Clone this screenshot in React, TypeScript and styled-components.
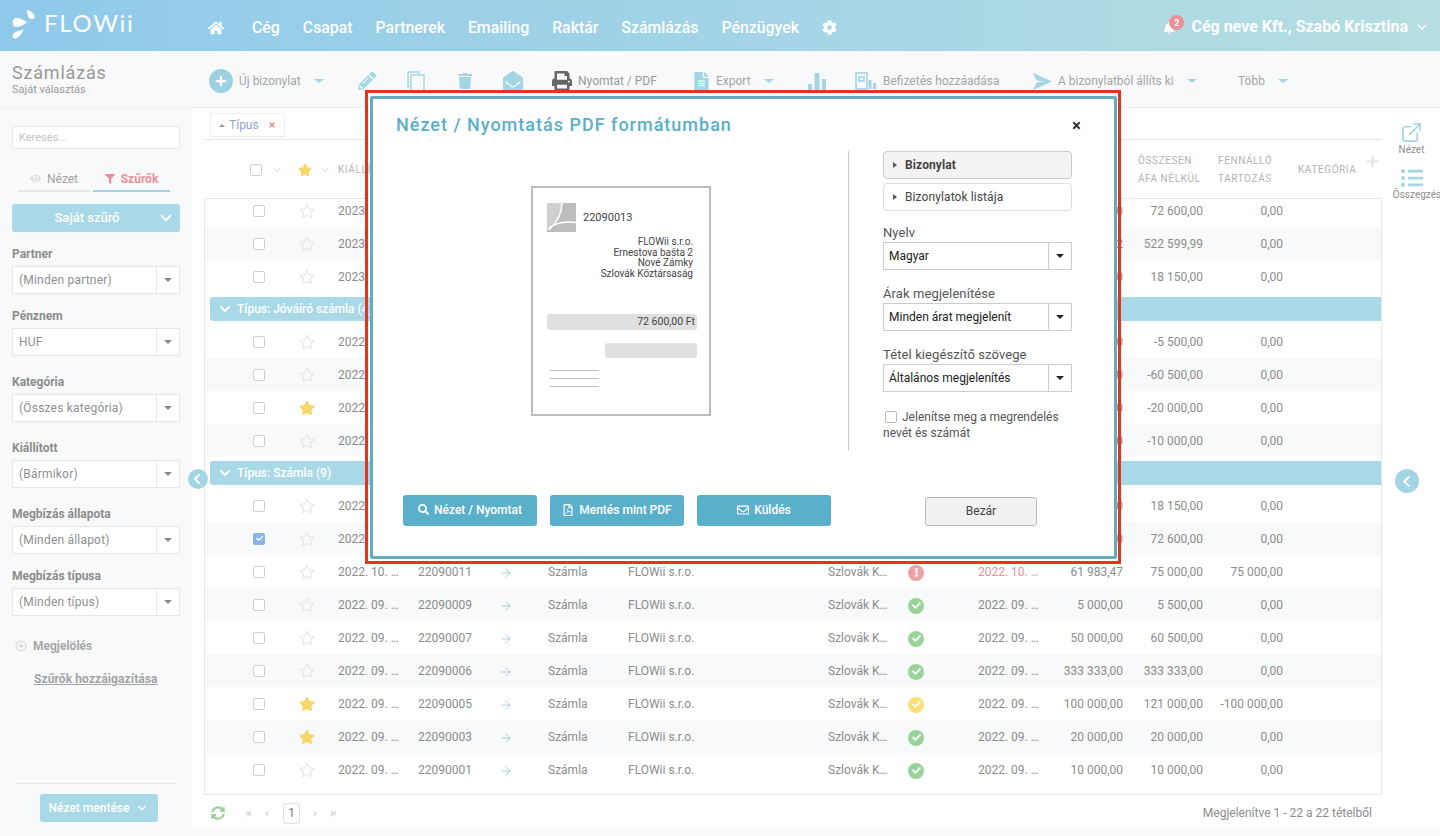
import React from "react";
import styled, { createGlobalStyle } from "styled-components";
import {
  FaHome, FaCog, FaBell, FaPencilAlt, FaTrash, FaEnvelopeOpen, FaPrint, FaFileAlt,
  FaStar, FaRegStar, FaSearch, FaRegEnvelope, FaRegFilePdf, FaEye, FaFilter, FaTimes, FaPlus, FaSyncAlt,
  FaStepBackward, FaStepForward, FaCaretLeft, FaCaretRight, FaCheck, FaExclamation, FaChevronLeft,
  FaListUl,
} from "react-icons/fa";
import { ChevronDown, ArrowRight, ExternalLink, CirclePlus } from "lucide-react";

const Global = createGlobalStyle`
  html, body { margin: 0; padding: 0; height: 836px; overflow: hidden; background: #f7f9fb; }
  * { box-sizing: border-box; }
  body { font-family: Roboto, "Liberation Sans", sans-serif; font-size: 12px; color: #888; }
`;

const Page = styled.div`
  position: relative; width: 1440px; height: 836px; overflow: hidden; display: flex; flex-direction: column;
  background: #f7f9fb;
`;

/* ---------- top navigation ---------- */
const TopBar = styled.header`
  height: 51px; flex: none; display: flex; align-items: center; color: #fff;
  background: linear-gradient(90deg, #8fc9ea 0%, #a3d4e6 50%, #b6dee2 100%);
`;
const LogoBox = styled.div`
  width: 208px; flex: none; display: flex; align-items: center; padding: 0 0 3px 12px; gap: 7px;
`;
const LogoText = styled.span`
  font-family: Lato, Roboto, sans-serif; font-weight: 400; font-size: 24px; letter-spacing: 1.7px; line-height: 26px; margin-bottom: 3px;
`;
const Nav = styled.nav`
  display: flex; align-items: center; gap: 23px; font-size: 15.85px; font-weight: 500; padding-top: 4px;
`;
const NavLink = styled.span`
  white-space: nowrap;
`;
const NavIconSlot = styled.span`
  display: flex; align-items: center; width: 21px;
`;
const UserArea = styled.div`
  margin-left: auto; display: flex; align-items: center; padding-right: 10px; padding-top: 2px;
  font-size: 16px; font-weight: 700; position: relative; white-space: nowrap;
`;
const BellWrap = styled.span`
  position: relative; width: 28px; display: flex; align-items: center; padding-top: 3px;
`;
const Badge = styled.span`
  position: absolute; left: 6px; top: -4px; width: 15px; height: 15px; border-radius: 50%;
  background: #ee8f95; color: #fff; font-size: 9px; font-weight: 700; display: flex; align-items: center; justify-content: center;
`;
const UserChevron = styled.span`
  display: flex; margin-left: 6px;
`;

/* ---------- toolbar ---------- */
const SubBar = styled.div`
  height: 57px; flex: none; display: flex; align-items: center; border-bottom: 1px solid #eef1f3; background: #f7f9fb;
`;
const PageTitleBox = styled.div`
  width: 209px; flex: none; padding-left: 12px; color: #999; padding-top: 1px;
`;
const PageTitle = styled.div`
  font-size: 18px; line-height: 20px; letter-spacing: .8px;
`;
const PageSub = styled.div`
  font-size: 11px; line-height: 13px;
`;
const ToolItem = styled.div<{ $w: number; $dark?: boolean }>`
  width: ${p => p.$w}px; flex: none; display: flex; align-items: center; gap: 6px; font-size: 12px;
  color: ${p => (p.$dark ? "#999" : "#a5a5a5")}; white-space: nowrap; padding-top: 4px;
  svg { color: ${p => (p.$dark ? "#666" : "#a4d5e4")}; flex: none; }
`;
const PlusCircle = styled.span`
  width: 24px; height: 24px; border-radius: 50%; background: #9dd1e2; color: #fff; flex: none; display: flex; align-items: center; justify-content: center;
  svg { color: #fff; }
`;
const ToolCaret = styled.span`
  margin-left: 7px; width: 0; height: 0; border-left: 5px solid transparent; border-right: 5px solid transparent; border-top: 4px solid #a4d5e4; flex: none;
`;
const ExportIcon = styled(FaFileAlt)`
  margin-right: -1px;
`;

/* ---------- body ---------- */
const Body = styled.div`
  flex: 1; display: flex; min-height: 0;
`;
const Sidebar = styled.aside`
  width: 192px; flex: none; padding: 18px 12px 14px; display: flex; flex-direction: column; background: #f7f9fb;
`;
const SearchBox = styled.div`
  height: 23px; flex: none; background: #fff; border: 1px solid #e4e6e8; padding-left: 6px; display: flex; align-items: center;
  color: #c4c4c4; font-size: 11px;
`;
const Tabs = styled.div`
  display: flex; margin: 17px 10px 0 6px; gap: 3px; height: 26px; flex: none;
`;
const Tab = styled.div<{ $active?: boolean; $w: number }>`
  width: ${p => p.$w}px; display: flex; align-items: center; justify-content: center; gap: 6px; font-size: 12px; padding-top: 1px;
  font-weight: ${p => (p.$active ? 700 : 400)};
  color: ${p => (p.$active ? "#ea8f98" : "#a3a3a3")};
  border-bottom: 2px solid ${p => (p.$active ? "#9fd1e0" : "#e6e8ea")};
`;
const FilterButton = styled.div`
  height: 28px; flex: none; margin-top: 12px; background: #a9d8e6; border-radius: 3px; color: #fff; font-size: 13px; font-weight: 500;
  display: flex; align-items: center; justify-content: center; position: relative; padding: 0 18px 1px 0;
`;
const FilterChevron = styled.span`
  position: absolute; right: 5px; top: 5px; display: flex;
`;
const FieldLabel = styled.div<{ $top: number }>`
  margin-top: ${p => p.$top}px; font-size: 12px; font-weight: 700; line-height: 14px; color: #8c8c8c; flex: none;
`;
const SideSelect = styled.div`
  margin-top: 5px; height: 28px; flex: none; background: #fff; border: 1px solid #e4e6e8; display: flex; align-items: center;
  font-size: 12px; letter-spacing: .2px; color: #8f8f8f;
`;
const SideSelectText = styled.span`
  flex: 1; padding-left: 6px;
`;
const SideSelectBtn = styled.span`
  width: 23px; height: 100%; border-left: 1px solid #e4e6e8; display: flex; align-items: center; justify-content: center;
`;
const Caret = styled.span<{ $dark?: boolean }>`
  width: 0; height: 0; border-left: 4px solid transparent; border-right: 4px solid transparent;
  border-top: 4px solid ${p => (p.$dark ? "#222" : "#888")};
`;
const MarkRow = styled.div`
  margin-top: 23px; margin-left: 3px; height: 14px; flex: none; display: flex; align-items: center; gap: 6px; font-weight: 700; color: #a8a8a8; font-size: 12px;
`;
const AdjustLink = styled.div`
  margin: 19px 0 0 22px; flex: none; font-weight: 700; font-size: 12px; line-height: 14px; color: #a3a3a3; text-decoration: underline; letter-spacing: .1px;
`;
const SideFooter = styled.div`
  margin: auto 4px 0; border-top: 1px solid #e4e6e8; padding: 10px 0 0 24px;
`;
const SaveButton = styled.div`
  width: 118px; height: 28px; background: #a9d8e6; border-radius: 3px; color: #fff; font-weight: 500; font-size: 12px;
  display: flex; align-items: center; justify-content: center; gap: 6px;
`;

/* ---------- main table ---------- */
const MainWrap = styled.main`
  flex: none; width: 1248px; height: 720px; background: #fff; display: flex;
`;
const Content = styled.div`
  width: 1190px; flex: none; padding-left: 12px; display: flex; flex-direction: column;
`;
const ChipBar = styled.div`
  width: 1178px; height: 32px; flex: none; border-bottom: 1px solid #e5e7e9; padding: 5px 0 0 6px;
`;
const Chip = styled.div`
  width: 75px; height: 24px; border: 1px solid #eceef0; border-radius: 2px; display: flex; align-items: center; gap: 4px; padding-left: 8px;
  color: #8fa5d6; font-size: 12px;
`;
const ChipArrow = styled.span`
  width: 0; height: 0; border-left: 3px solid transparent; border-right: 3px solid transparent; border-bottom: 3px solid #999;
`;
const ChipClose = styled.span`
  color: #e78a92; display: flex; margin-left: 5px;
`;
const columns = "46px 39px 80px 80px 50px 80px 200px 80px 70px 80px 65px 80px 80px 98px";
const HeadRow = styled.div`
  width: 1178px; height: 58px; flex: none; padding: 2px 0 0 49px; display: grid; grid-template-columns: ${columns}; align-items: center;
  color: #b3b3b3; font-size: 10px; letter-spacing: .6px; line-height: 18px;
`;
const HeadCheck = styled.div`
  display: flex; align-items: center; gap: 9px; margin-left: -3px;
  color: #c4c4c4;
`;
const HeadStar = styled.div`
  display: flex; align-items: center; gap: 7px; margin-left: -1px; color: #c4c4c4;
  svg:first-child { color: #f8d568; }
`;
const HeadLabel = styled.div`
  white-space: nowrap;
`;
const HeadNum = styled.div`
  padding-left: 15px; white-space: nowrap;
`;
const HeadLast = styled.div`
  padding-left: 15px; display: flex; align-items: center; justify-content: space-between; padding-right: 2px; color: #b3b3b3; white-space: nowrap;
`;
const HeadPlus = styled.span`
  color: #e3e6e8; display: flex; margin-top: -18px;
`;
const TableBody = styled.div`
  width: 1178px; height: 597px; flex: none; border: 1px solid #e5e7e9; overflow: hidden;
  & > div:first-child { margin-top: -5px; }
`;
const RowGroup = styled.div`
  & > div:nth-child(even) { background: #f7f9fb; }
`;
const Row = styled.div<{ $selected?: boolean }>`
  height: 33px; padding-left: 48px; display: grid; grid-template-columns: ${columns}; align-items: center;
  color: #8c8c8c; font-size: 12px; white-space: nowrap;
  && { background: ${p => (p.$selected ? "#eef5fb" : "")}; }
`;
const GroupHead = styled.div`
  height: 24px; margin: 4px 0 4px 5px; background: #a9d8e6; border-radius: 3px 0 0 3px; color: #fff; font-size: 12px; font-weight: 500;
  display: flex; align-items: center; gap: 4px; padding-left: 7px; white-space: nowrap;
`;
const Check = styled.span<{ $on?: boolean }>`
  width: 12px; height: 12px; border-radius: 2px; border: 1px solid ${p => (p.$on ? "#8ab4ea" : "#cfcfcf")}; background: ${p => (p.$on ? "#8ab4ea" : "#fff")};
  display: flex; align-items: center; justify-content: center; color: #fff;
`;
const StarCell = styled.span<{ $on?: boolean }>`
  display: flex; color: ${p => (p.$on ? "#f8d568" : "#e6e8ea")};
`;
const ArrowCell = styled.span`
  display: flex; color: #9dc9de; padding: 2px 0 0 1px;
`;
const Num = styled.div`
  text-align: right;
`;
const DueDate = styled.div<{ $late?: boolean }>`
  color: ${p => (p.$late ? "#ea8f98" : "inherit")};
`;
const Status = styled.span<{ $c: string }>`
  width: 16px; height: 16px; border-radius: 50%; background: ${p => p.$c}; color: #fff; display: flex; align-items: center; justify-content: center; margin: 2px 0 0 0;
`;
const TableFoot = styled.div`
  width: 1178px; flex: 1; display: flex; align-items: center; padding: 3px 10px 0 7px; color: #8c8c8c;
`;
const Refresh = styled.span`
  color: #9ed09e; display: flex; margin-right: 20px;
`;
const Pager = styled.div`
  display: flex; align-items: center; gap: 10px; color: #d8d8d8;
`;
const PageBox = styled.span`
  width: 17px; height: 21px; border: 1px solid #e0e0e0; border-radius: 3px; color: #777; display: flex; align-items: center; justify-content: center; margin: 0 1px 0 2px;
`;
const FootInfo = styled.div`
  margin-left: auto; font-size: 12px;
`;
const RightRail = styled.aside`
  width: 58px; flex: none; padding-top: 13px; display: flex; flex-direction: column; align-items: center;
`;
const RailItem = styled.div`
  width: 58px; display: flex; flex-direction: column; align-items: center; font-size: 10px; color: #8e8e8e; padding-left: 1px; white-space: nowrap; line-height: 12px; margin-bottom: 11px;
  svg { color: #a4d5e4; }
`;
const RailLabel = styled.span<{ $shift?: number }>`
  margin-left: ${p => p.$shift ?? 0}px;
`;

const SideToggle = styled.div<{ $x: number; $y: number; $s: number }>`
  position: absolute; left: ${p => p.$x}px; top: ${p => p.$y}px; width: ${p => p.$s}px; height: ${p => p.$s}px; border-radius: 50%;
  background: #a4d5e4; color: #fff; display: flex; align-items: center; justify-content: center; padding-right: 2px;
`;

/* ---------- dialog ---------- */
const Highlight = styled.div`
  position: absolute; left: 365px; top: 90px; width: 756px; height: 474px; border: 3px solid #e8321a; padding: 3px 1px 2px 2px;
  display: flex;
`;
const Dialog = styled.section`
  flex: 1; border: 3px solid #64abc2; border-radius: 2px; background: #fff; display: flex; flex-direction: column; color: #444;
`;
const DialogHead = styled.div`
  height: 52px; flex: none; display: flex; align-items: center; justify-content: space-between; padding: 0 32px 1px 23px;
`;
const DialogTitle = styled.h2`
  margin: 0; font-size: 18px; font-weight: 500; letter-spacing: 1px; color: #5aaec8;
`;
const CloseX = styled.span`
  color: #333; display: flex; margin-top: 1px;
`;
const DialogMain = styled.div`
  height: 300px; flex: none; display: flex;
`;
const PreviewCol = styled.div`
  width: 475px; flex: none; padding: 35px 0 0 158px;
`;
const Paper = styled.div`
  width: 180px; height: 230px; border: 2px solid #bcbcbc; padding: 15px 12px 0 14px; color: #444; font-size: 10px; line-height: 10.7px;
  display: flex; flex-direction: column;
`;
const PaperTop = styled.div`
  display: flex; align-items: center; gap: 7px; font-size: 11px;
`;
const PaperNumber = styled.span`
  padding-top: 1px;
`;
const PaperAddress = styled.div`
  text-align: right; margin: 5px 4px 0 0;
`;
const PaperBar = styled.div`
  margin-top: 34px; height: 16px; background: #e0e0e0; border-radius: 3px; text-align: right; font-size: 10.5px; line-height: 16px; padding-right: 2px;
`;
const PaperBarShort = styled.div`
  margin: 13px 0 0 58px; height: 15px; background: #e0e0e0; border-radius: 3px;
`;
const PaperLines = styled.div`
  margin: 12px 0 0 3px; width: 49px; display: flex; flex-direction: column; gap: 6.5px;
`;
const PaperLine = styled.span`
  height: 1.5px; background: #c0c0c0;
`;
const OptionsCol = styled.div`
  flex: 1; border-left: 1px solid #ccc; padding-left: 34px; width: 265px;
`;
const OptionBtn = styled.div<{ $active?: boolean }>`
  width: 189px; height: 28px; margin-bottom: 4px; border: 1px solid ${p => (p.$active ? "#ccc" : "#ddd")}; border-radius: 4px;
  background: ${p => (p.$active ? "#f3f3f3" : "#fff")}; font-weight: ${p => (p.$active ? 700 : 400)}; font-size: 12px; color: #444;
  display: flex; align-items: center; gap: 8px; padding-left: 9px; letter-spacing: .1px;
`;
const TinyArrow = styled.span`
  width: 0; height: 0; border-top: 3px solid transparent; border-bottom: 3px solid transparent; border-left: 4px solid #555;
`;
const OptLabel = styled.div<{ $top: number }>`
  margin-top: ${p => p.$top}px; font-size: 13px; line-height: 15px; color: #555; letter-spacing: .1px;
`;
const OptSelect = styled.div`
  margin-top: 2px; width: 189px; height: 28px; border: 1px solid #ccc; display: flex; align-items: center; font-size: 12px; font-weight: 400; color: #222;
`;
const OptSelectText = styled.span`
  flex: 1; padding-left: 5px;
`;
const OptSelectBtn = styled.span`
  width: 23px; height: 100%; border-left: 1px solid #ccc; display: flex; align-items: center; justify-content: center;
`;
const CheckLine = styled.div`
  margin-top: 17px; width: 189px; font-size: 12px; line-height: 16px; color: #555;
`;
const SmallCheck = styled.span`
  display: inline-block; width: 12px; height: 12px; border: 1px solid #bbb; border-radius: 2px; margin: 0 5px 0 2px; vertical-align: -2px;
`;
const DialogFoot = styled.div`
  flex: none; display: flex; margin-top: 44px; padding-left: 30px; gap: 13px;
`;
const ActionBtn = styled.div`
  width: 134px; height: 31px; background: #5aafcb; border-radius: 3px; color: #fff; font-size: 12px; font-weight: 500;
  display: flex; align-items: center; justify-content: center; gap: 5px; padding-bottom: 2px;
`;
const CloseBtn = styled.div`
  width: 112px; height: 29px; margin: 2px 0 0 81px; background: #f1f1f1; border: 1px solid #bbb; border-radius: 3px; color: #444; font-size: 12px; font-weight: 400;
  display: flex; align-items: center; justify-content: center; padding-bottom: 2px;
`;

/* ---------- data ---------- */
type R = { d: string; n: string; star?: boolean; st: string; due: string; net: string; tot: string; out: string; type: string; sel?: boolean; late?: boolean; on?: boolean; covered?: boolean };
const G = "#9ad39a", Y = "#f9df76", P = "#f0a0a6";
const mk = (d: string, n: string, type: string, st: string, net: string, tot: string, out = "0,00", x: Partial<R> = {}): R => ({ d, n, type, st, due: d, net, tot, out, ...x });
const c = { covered: true };
const g1 = [
  mk("2023. 01. …", "23010003", "Számla", G, "60 000,00", "72 600,00", "0,00", c),
  mk("2023. 01. …", "23010002", "Számla", G, "431 900,82", "522 599,99", "0,00", c),
  mk("2023. 01. …", "23010001", "Számla", G, "15 000,00", "18 150,00", "0,00", c),
];
const g2 = [
  mk("2022. 12. …", "22120004", "Jóváíró számla", G, "-5 000,00", "-5 500,00", "0,00", c),
  mk("2022. 12. …", "22120003", "Jóváíró számla", G, "-50 000,00", "-60 500,00", "0,00", c),
  mk("2022. 11. …", "22110002", "Jóváíró számla", G, "-20 000,00", "-20 000,00", "0,00", { star: true, ...c }),
  mk("2022. 11. …", "22110001", "Jóváíró számla", G, "-10 000,00", "-10 000,00", "0,00", c),
];
const g3 = [
  mk("2022. 10. …", "22090013", "Számla", G, "15 000,00", "18 150,00", "0,00", c),
  mk("2022. 10. …", "22090012", "Számla", G, "60 000,00", "72 600,00", "0,00", { sel: true, on: true, ...c }),
  mk("2022. 10. …", "22090011", "Számla", P, "61 983,47", "75 000,00", "75 000,00", { late: true }),
  mk("2022. 09. …", "22090009", "Számla", G, "5 000,00", "5 500,00"),
  mk("2022. 09. …", "22090007", "Számla", G, "50 000,00", "60 500,00"),
  mk("2022. 09. …", "22090006", "Számla", G, "333 333,00", "333 333,00"),
  mk("2022. 09. …", "22090005", "Számla", Y, "100 000,00", "121 000,00", "-100 000,00", { star: true }),
  mk("2022. 09. …", "22090003", "Számla", G, "20 000,00", "20 000,00", "0,00", { star: true }),
  mk("2022. 09. …", "22090001", "Számla", G, "10 000,00", "10 000,00"),
];
const filters = [
  { l: "Partner", v: "(Minden partner)", t: 15 },
  { l: "Pénznem", v: "HUF", t: 15 },
  { l: "Kategória", v: "(Összes kategória)", t: 19 },
  { l: "Kiállított", v: "(Bármikor)", t: 19 },
  { l: "Megbízás állapota", v: "(Minden állapot)", t: 19 },
  { l: "Megbízás típusa", v: "(Minden típus)", t: 15 },
];
const nav = ["Cég", "Csapat", "Partnerek", "Emailing", "Raktár", "Számlázás", "Pénzügyek"];

const DataRow = ({ r }: { r: R }) => (
  <Row $selected={r.sel}>
    <Check $on={r.on}>{r.on && <FaCheck size={7} />}</Check>
    <StarCell $on={r.star}>{r.star ? <FaStar size={16} /> : <FaRegStar size={16} />}</StarCell>
    <div>{r.d}</div>
    {r.covered ? (
      <>
        <span /><span /><span /><span /><span /><span /><span />
      </>
    ) : (
      <>
        <div>{r.n}</div>
        <ArrowCell><ArrowRight size={14} strokeWidth={1.5} /></ArrowCell>
        <div>{r.type}</div>
        <div>FLOWii s.r.o.</div>
        <div>Szlovák K…</div>
        <Status $c={r.st}>{r.st === P ? <FaExclamation size={9} /> : <FaCheck size={9} />}</Status>
        <DueDate $late={r.late}>{r.due}</DueDate>
      </>
    )}
    <Num>{r.net}</Num>
    <Num>{r.tot}</Num>
    <Num>{r.out}</Num>
  </Row>
);

const Group = ({ rows }: { rows: R[] }) => (
  <RowGroup>{rows.map(r => <DataRow key={r.n} r={r} />)}</RowGroup>
);

const GroupTitle = ({ children }: { children: React.ReactNode }) => (
  <GroupHead><ChevronDown size={16} strokeWidth={3} />{children}</GroupHead>
);

const Logo = () => (
  <svg width="25" height="31" viewBox="0 0 26 32" fill="#fff">
    <path d="M15 1C20 2 24 5 23.500 8.500C23 10.500 20 11 18 9.500C16 7.500 16 4 15 1Z" />
    <path d="M16 13.500C11 18 6 19 3 18.500C0 17.500 0 11 3 9.500C6 8 11 11 16 13.500Z" />
    <path d="M12 21C11 25 7.500 29.500 4 30.500C1 31 -.5 28 1.500 25.500C3 23.500 7 23 12 21Z" />
  </svg>
);
const CopyPages = () => (
  <svg width="18" height="21" viewBox="0 0 18 21" fill="none" stroke="currentColor" strokeWidth="1.500">
    <path d="M3 15.500H1V1H12V3" />
    <rect x="4" y="4" width="13" height="16" />
  </svg>
);
const Bars = () => (
  <svg width="18" height="22" viewBox="0 0 18 22" fill="currentColor">
    <rect x="0" y="14" width="4" height="8" /><rect x="6.500" y="3" width="5" height="19" /><rect x="14" y="9" width="4" height="13" />
  </svg>
);
const Payment = () => (
  <svg width="22" height="18" viewBox="0 0 22 18" fill="none" stroke="currentColor" strokeWidth="1.600">
    <rect x="1" y="1" width="11" height="16" /><path d="M4 5h5v4H4z" />
    <path d="M13.500 8h3v9h-3zM18 11h3v6h-3z" fill="currentColor" stroke="none" />
  </svg>
);
const Send = () => (
  <svg width="19" height="17" viewBox="0 0 19 17" fill="currentColor">
    <path d="M0 0L19 8.500L0 17L3.500 9.500L12 8.500L3.500 7.500Z" />
  </svg>
);
const AcrobatMark = () => (
  <svg width="29" height="29" viewBox="0 0 29 29">
    <rect width="29" height="29" fill="#bdbdbd" />
    <path d="M0 0h15C15 8 11 17 2 25L0 27Z" fill="#cfcfcf" />
    <path d="M15 0C15 9 11 18 3 26C1 28 2 24 6 22.500C13 19.500 21 18.500 29 19.500" fill="none" stroke="#fff" strokeWidth="1.500" />
  </svg>
);

export default function App() {
  return (
    <Page>
      <Global />
      <TopBar>
        <LogoBox><Logo /><LogoText>FLOWii</LogoText></LogoBox>
        <Nav>
          <NavIconSlot><FaHome size={16} /></NavIconSlot>
          {nav.map(n => <NavLink key={n}>{n}</NavLink>)}
          <NavIconSlot><FaCog size={15} /></NavIconSlot>
        </Nav>
        <UserArea>
          <BellWrap><FaBell size={12} /><Badge>2</Badge></BellWrap>
          Cég neve Kft., Szabó Krisztina
          <UserChevron><ChevronDown size={16} strokeWidth={2} /></UserChevron>
        </UserArea>
      </TopBar>

      <SubBar>
        <PageTitleBox>
          <PageTitle>Számlázás</PageTitle>
          <PageSub>Saját választás</PageSub>
        </PageTitleBox>
        <ToolItem $w={149}><PlusCircle><FaPlus size={12} /></PlusCircle>Új bizonylat<ToolCaret /></ToolItem>
        <ToolItem $w={49}><FaPencilAlt size={18} /></ToolItem>
        <ToolItem $w={50}><CopyPages /></ToolItem>
        <ToolItem $w={46}><FaTrash size={16} /></ToolItem>
        <ToolItem $w={49}><FaEnvelopeOpen size={20} /></ToolItem>
        <ToolItem $w={140} $dark><FaPrint size={20} />Nyomtat / PDF</ToolItem>
        <ToolItem $w={116}><ExportIcon size={19} />Export<ToolCaret /></ToolItem>
        <ToolItem $w={47}><Bars /></ToolItem>
        <ToolItem $w={178}><Payment />Befizetés hozzáadása</ToolItem>
        <ToolItem $w={205}><Send />A bizonylatból állíts ki<ToolCaret /></ToolItem>
        <ToolItem $w={80}>Több<ToolCaret /></ToolItem>
      </SubBar>

      <Body>
        <Sidebar>
          <SearchBox>Keresés...</SearchBox>
          <Tabs>
            <Tab $w={72}><FaEye size={11} color="#ddd" />Nézet</Tab>
            <Tab $w={77} $active><FaFilter size={10} />Szűrők</Tab>
          </Tabs>
          <FilterButton>
            Saját szűrő
            <FilterChevron><ChevronDown size={18} strokeWidth={2.500} /></FilterChevron>
          </FilterButton>
          {filters.map(f => (
            <React.Fragment key={f.l}>
              <FieldLabel $top={f.t}>{f.l}</FieldLabel>
              <SideSelect>
                <SideSelectText>{f.v}</SideSelectText>
                <SideSelectBtn><Caret /></SideSelectBtn>
              </SideSelect>
            </React.Fragment>
          ))}
          <MarkRow><CirclePlus size={12} strokeWidth={1.200} color="#bbb" />Megjelölés</MarkRow>
          <AdjustLink>Szűrők hozzáigazítása</AdjustLink>
          <SideFooter>
            <SaveButton>Nézet mentése <ChevronDown size={14} strokeWidth={2} /></SaveButton>
          </SideFooter>
        </Sidebar>

        <MainWrap>
          <Content>
            <ChipBar>
              <Chip><ChipArrow />Típus<ChipClose><FaTimes size={8} /></ChipClose></Chip>
            </ChipBar>
            <HeadRow>
              <HeadCheck><Check /><ChevronDown size={12} strokeWidth={1.500} /></HeadCheck>
              <HeadStar><FaStar size={14} /><ChevronDown size={12} strokeWidth={1.500} /></HeadStar>
              <HeadLabel>KIÁLLÍTVA</HeadLabel>
              <span /><span /><span /><span /><span /><span /><span /><span />
              <HeadNum>ÖSSZESEN<br />ÁFA NÉLKÜL</HeadNum>
              <HeadNum>FENNÁLLÓ<br />TARTOZÁS</HeadNum>
              <HeadLast>KATEGÓRIA<HeadPlus><FaPlus size={13} /></HeadPlus></HeadLast>
            </HeadRow>
            <TableBody>
              <Group rows={g1} />
              <GroupTitle>Típus: Jóváíró számla (4)</GroupTitle>
              <Group rows={g2} />
              <GroupTitle>Típus: Számla (9)</GroupTitle>
              <Group rows={g3} />
            </TableBody>
            <TableFoot>
              <Refresh><FaSyncAlt size={14} /></Refresh>
              <Pager>
                <FaStepBackward size={7} />
                <FaCaretLeft size={9} />
                <PageBox>1</PageBox>
                <FaCaretRight size={9} />
                <FaStepForward size={7} />
              </Pager>
              <FootInfo>Megjelenítve 1 - 22 a 22 tételből</FootInfo>
            </TableFoot>
          </Content>
          <RightRail>
            <RailItem><ExternalLink size={23} strokeWidth={1.800} /><RailLabel>Nézet</RailLabel></RailItem>
            <RailItem><FaListUl size={22} /><RailLabel $shift={11}>Összegzés</RailLabel></RailItem>
          </RightRail>
        </MainWrap>
      </Body>

      <SideToggle $x={188} $y={469} $s={20}><FaChevronLeft size={12} /></SideToggle>
      <SideToggle $x={1395} $y={469} $s={24}><FaChevronLeft size={13} /></SideToggle>

      <Highlight>
        <Dialog>
          <DialogHead>
            <DialogTitle>Nézet / Nyomtatás PDF formátumban</DialogTitle>
            <CloseX><FaTimes size={11} /></CloseX>
          </DialogHead>
          <DialogMain>
            <PreviewCol>
              <Paper>
                <PaperTop><AcrobatMark /><PaperNumber>22090013</PaperNumber></PaperTop>
                <PaperAddress>FLOWii s.r.o.<br />Ernestova bašta 2<br />Nové Zámky<br />Szlovák Köztársaság</PaperAddress>
                <PaperBar>72 600,00 Ft</PaperBar>
                <PaperBarShort />
                <PaperLines><PaperLine /><PaperLine /><PaperLine /></PaperLines>
              </Paper>
            </PreviewCol>
            <OptionsCol>
              <OptionBtn $active><TinyArrow />Bizonylat</OptionBtn>
              <OptionBtn><TinyArrow />Bizonylatok listája</OptionBtn>
              <OptLabel $top={14}>Nyelv</OptLabel>
              <OptSelect><OptSelectText>Magyar</OptSelectText><OptSelectBtn><Caret $dark /></OptSelectBtn></OptSelect>
              <OptLabel $top={16}>Árak megjelenítése</OptLabel>
              <OptSelect><OptSelectText>Minden árat megjelenít</OptSelectText><OptSelectBtn><Caret $dark /></OptSelectBtn></OptSelect>
              <OptLabel $top={16}>Tétel kiegészítő szövege</OptLabel>
              <OptSelect><OptSelectText>Általános megjelenítés</OptSelectText><OptSelectBtn><Caret $dark /></OptSelectBtn></OptSelect>
              <CheckLine><SmallCheck />Jelenítse meg a megrendelés<br />nevét és számát</CheckLine>
            </OptionsCol>
          </DialogMain>
          <DialogFoot>
            <ActionBtn><FaSearch size={11} />Nézet / Nyomtat</ActionBtn>
            <ActionBtn><FaRegFilePdf size={12} />Mentés mint PDF</ActionBtn>
            <ActionBtn><FaRegEnvelope size={12} />Küldés</ActionBtn>
            <CloseBtn>Bezár</CloseBtn>
          </DialogFoot>
        </Dialog>
      </Highlight>
    </Page>
  );
}
